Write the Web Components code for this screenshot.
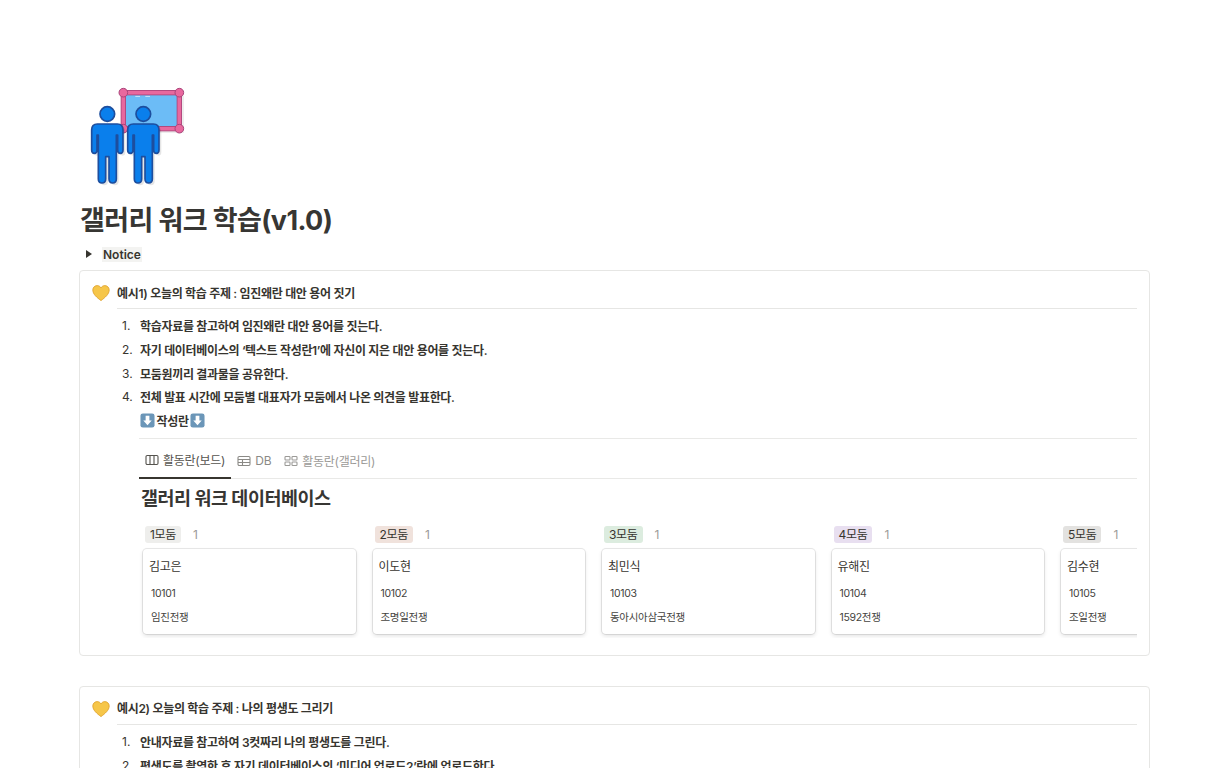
<!DOCTYPE html>
<html lang="ko">
<head>
<meta charset="utf-8">
<title>갤러리 워크 학습</title>
<style>
  html, body { margin: 0; height: 768px; overflow: hidden; background: #fff; }
  body {
    font-family: Inter, "Noto Sans CJK KR", sans-serif;
    color: #37352f;
  }
</style>
</head>
<body>
<notion-page>
  <page-icon slot="pageicon"></page-icon>
  <h1 slot="title">갤러리 워크 학습(v1.0)</h1>
  <notion-toggle slot="toggle">Notice</notion-toggle>

  <notion-callout heading="예시1) 오늘의 학습 주제 : 임진왜란 대안 용어 짓기">
    <num-item n="1">학습자료를 참고하여 임진왜란 대안 용어를 짓는다.</num-item>
    <num-item n="2">자기 데이터베이스의 ‘텍스트 작성란1’에 자신이 지은 대안 용어를 짓는다.</num-item>
    <num-item n="3">모둠원끼리 결과물을 공유한다.</num-item>
    <num-item n="4">전체 발표 시간에 모둠별 대표자가 모둠에서 나온 의견을 발표한다.</num-item>
    <write-label>작성란</write-label>
    <board-view title="갤러리 워크 데이터베이스">
      <board-column tag="1모둠" tone="#eeeeec" name="김고은" code="10101" topic="임진전쟁"></board-column>
      <board-column tag="2모둠" tone="#f0e2dc" name="이도현" code="10102" topic="조명일전쟁"></board-column>
      <board-column tag="3모둠" tone="#dcecdf" name="최민식" code="10103" topic="동아시아삼국전쟁"></board-column>
      <board-column tag="4모둠" tone="#e8dff0" name="유해진" code="10104" topic="1592전쟁"></board-column>
      <board-column tag="5모둠" tone="#e3e2e0" name="김수현" code="10105" topic="조일전쟁"></board-column>
    </board-view>
  </notion-callout>

  <notion-callout heading="예시2) 오늘의 학습 주제 : 나의 평생도 그리기">
    <num-item n="1">안내자료를 참고하여 3컷짜리 나의 평생도를 그린다.</num-item>
    <num-item n="2">평생도를 촬영한 후 자기 데이터베이스의 ‘미디어 업로드2’란에 업로드한다.</num-item>
  </notion-callout>
</notion-page>

<script>
function shadow(el, html) {
  el.attachShadow({ mode: 'open' }).innerHTML = html;
}

class NotionPage extends HTMLElement {
  connectedCallback() {
    shadow(this, `
      <style>
        :host { display: block; padding: 75px 79px 0; }
        ::slotted(h1) {
          margin: 8px 0 0 1px;
          font-size: 27px;
          letter-spacing: -.6px;
          line-height: 36px;
          font-weight: 700;
          color: #373633;
        }
        .body { display: flex; flex-direction: column; gap: 30px; }
      </style>
      <slot name="pageicon"></slot>
      <slot name="title"></slot>
      <slot name="toggle"></slot>
      <div class="body"><slot></slot></div>
    `);
  }
}

class PageIcon extends HTMLElement {
  connectedCallback() {
    const person = `M-30 147H30Q47 147 47 165V225Q47 235 39 235Q31 235 31 225V180H27V312Q27 324 16 324Q5 324 5 312V245H-5V312Q-5 324-16 324Q-27 324-27 312V180H-31V225Q-31 235-39 235Q-47 235-47 225V165Q-47 147-30 147Z`;
    const man = x => `
      <g transform="translate(${x} 0)">
        <path d="${person}" transform="translate(7 7)" fill="#000" opacity=".1"/>
        <path d="${person}" fill="#0a7fec" stroke="#1d4e9e" stroke-width="5" stroke-linejoin="round"/>
        <circle cy="117" r="22" fill="#0a7fec" stroke="#1d4e9e" stroke-width="5"/>
      </g>`;
    shadow(this, `
      <style>
        :host { display: block; width: 130px; height: 120px; margin-left: -9px; }
        svg { display: block; filter: blur(.4px); }
      </style>
      <svg width="130" height="120" viewBox="0 0 390 360">
        <rect x="166" y="62" width="176" height="112" fill="#000" opacity=".07"/>
        <rect x="160" y="53" width="168" height="108" fill="#6cbcf6"/>
        <path d="M196 64h14M226 64h14" stroke="#cfe9fb" stroke-width="3"/>
        <rect x="160" y="53" width="168" height="108" fill="none" stroke="#a8447a" stroke-width="16"/>
        <rect x="160" y="53" width="168" height="108" fill="none" stroke="#e8689e" stroke-width="11"/>
        <g fill="#e8689e" stroke="#a8447a" stroke-width="3">
          <circle cx="160" cy="53" r="13"/><circle cx="328" cy="53" r="13"/>
          <circle cx="160" cy="161" r="13"/><circle cx="328" cy="161" r="13"/>
        </g>
        ${man(112)}${man(220)}
      </svg>
    `);
  }
}

class NotionToggle extends HTMLElement {
  connectedCallback() {
    shadow(this, `
      <style>
        :host {
          display: flex; align-items: center;
          height: 24px; margin: 3px 0 4px 7px;
          font-size: 12px; font-weight: 600; color: #37352f;
        }
        .arrow {
          width: 0; height: 0; margin-right: 10px;
          border-left: 6px solid #37352f;
          border-top: 4px solid transparent;
          border-bottom: 4px solid transparent;
        }
        .label { background: #f3f3f1; padding: 0 1px; line-height: 15px; }
      </style>
      <span class="arrow"></span><span class="label"><slot></slot></span>
    `);
  }
}

class NotionCallout extends HTMLElement {
  connectedCallback() {
    shadow(this, `
      <style>
        :host {
          display: block; box-sizing: border-box;
          border: 1px solid #e6e6e4; border-radius: 4px;
          padding: 7px 12px 17px 12px;
        }
        .top { display: flex; align-items: center; height: 28px; }
        svg { width: 18px; height: 18px; margin: 0 7px 0 0; flex: none; position: relative; top: 1px; }
        h3 { margin: 0; font-size: 12px; letter-spacing: -.32px; font-weight: 600; color: #37352f; }
        hr { border: 0; height: 1px; background: #e6e6e4; margin: 2px 0 5px 25px; }
        .list { margin-left: 25px; }
      </style>
      <div class="top">
        <svg viewBox="0 0 18 18">
          <path d="M9 16.600C5 13.600.8 10.200.8 6 .8 3.400 2.900 1.600 5.200 1.600 6.900 1.600 8.200 2.500 9 3.900 9.800 2.500 11.100 1.600 12.800 1.600 15.100 1.600 17.200 3.400 17.200 6 17.200 10.200 13 13.600 9 16.600Z" fill="#f6c649" stroke="#dd9d26" stroke-width=".8"/>
        </svg>
        <h3>${this.getAttribute('heading')}</h3>
      </div>
      <hr>
      <div class="list"><slot></slot></div>
    `);
  }
}

class NumItem extends HTMLElement {
  connectedCallback() {
    shadow(this, `
      <style>
        :host {
          display: flex; height: 23.7px; align-items: center;
          font-size: 12px; letter-spacing: -.32px; font-weight: 600; color: #37352f;
        }
        .n { width: 23px; padding-left: 5px; box-sizing: border-box; font-weight: 400; flex: none; letter-spacing: 0; }
      </style>
      <span class="n">${this.getAttribute('n')}.</span><span><slot></slot></span>
    `);
  }
}

class WriteLabel extends HTMLElement {
  connectedCallback() {
    const arrow = `<svg viewBox="0 0 16 16"><rect x=".5" y=".5" width="15" height="15" rx="2.5" fill="#6b96b8"/><path d="M6 3h4v5h2.500L8 13 3.500 8H6z" fill="#fff"/></svg>`;
    shadow(this, `
      <style>
        :host {
          display: flex; align-items: center; gap: 1.5px;
          height: 24px; margin-left: 23px;
          font-size: 12px; letter-spacing: -.32px; font-weight: 600; color: #37352f;
        }
        svg { width: 15px; height: 15px; }
      </style>
      ${arrow}<span><slot></slot></span>${arrow}
    `);
  }
}

class BoardView extends HTMLElement {
  connectedCallback() {
    const board = `<svg viewBox="0 0 14 14" fill="none" stroke="currentColor" stroke-width="1.1"><rect x="1" y="2.500" width="12" height="9" rx="1.200"/><path d="M5 2.500v9M9 2.500v9"/></svg>`;
    const table = `<svg viewBox="0 0 14 14" fill="none" stroke="currentColor" stroke-width="1.1"><rect x="1" y="2.500" width="12" height="9" rx="1.200"/><path d="M1 5.500h12M1 8.500h12M5.500 5.500v6"/></svg>`;
    const gallery = `<svg viewBox="0 0 14 14" fill="none" stroke="currentColor" stroke-width="1.1"><rect x="1" y="2.500" width="5" height="3.500" rx=".8"/><rect x="8" y="2.500" width="5" height="3.500" rx=".8"/><rect x="1" y="8" width="5" height="3.500" rx=".8"/><rect x="8" y="8" width="5" height="3.500" rx=".8"/></svg>`;
    shadow(this, `
      <style>
        :host { display: block; margin: 5px 0 0 22px; }
        .tabs {
          display: flex; height: 39px; align-items: stretch;
          border-top: 1px solid #e9e9e7; border-bottom: 1px solid #e9e9e7;
          font-size: 12px; letter-spacing: -.25px; color: #9b9a97;
        }
        .tab { display: flex; align-items: center; gap: 4px; padding: 3px 6px 0; position: relative; top: 1px; box-sizing: border-box; }
        .tab svg { width: 14px; height: 14px; }
        .tab.on { color: #55534e; border-bottom: 2px solid #37352f; }
        .tab.db { color: #8b8a86; }
        .tab.gal { margin-left: 1px; }
        h2 { margin: 4px 0 0 2px; font-size: 18.5px; letter-spacing: -.5px; line-height: 30px; font-weight: 700; color: #373633; }
        .cols {
          display: flex; gap: 17px; margin-top: 10px; padding: 0 0 4px 4px;
          overflow: hidden;
        }
      </style>
      <div class="tabs">
        <div class="tab on">${board}활동란(보드)</div>
        <div class="tab db">${table}DB</div>
        <div class="tab gal">${gallery}활동란(갤러리)</div>
      </div>
      <h2>${this.getAttribute('title')}</h2>
      <div class="cols"><slot></slot></div>
    `);
  }
}

class BoardColumn extends HTMLElement {
  connectedCallback() {
    const a = n => this.getAttribute(n);
    shadow(this, `
      <style>
        :host { display: block; flex: none; width: 212.5px; }
        .hd { display: flex; align-items: center; height: 24px; padding-left: 2px; font-size: 12px; letter-spacing: -.3px; }
        .tag { background: ${a('tone')}; border-radius: 3px; padding: 0 5px; line-height: 17px; color: #37352f; }
        .count { margin-left: 12px; color: #9b9a97; font-size: 12px; }
        .card {
          box-sizing: border-box; height: 85px; margin-top: 2px;
          border-radius: 4px; background: #fff; padding: 9px 6px;
          box-shadow: 0 0 0 1px rgba(15,15,15,.09), 0 2px 4px rgba(15,15,15,.12);
        }
        .name { font-size: 12px; letter-spacing: -.3px; line-height: 18px; color: #37352f; }
        .row { font-size: 10.5px; letter-spacing: -.3px; line-height: 16px; margin: 0 0 0 2px; color: #444340; }
        .name + .row { margin-top: 10px; }
        .row + .row { margin-top: 8px; }
      </style>
      <div class="hd"><span class="tag">${a('tag')}</span><span class="count">1</span></div>
      <div class="card">
        <div class="name">${a('name')}</div>
        <div class="row">${a('code')}</div>
        <div class="row">${a('topic')}</div>
      </div>
    `);
  }
}

customElements.define('notion-page', NotionPage);
customElements.define('page-icon', PageIcon);
customElements.define('notion-toggle', NotionToggle);
customElements.define('notion-callout', NotionCallout);
customElements.define('num-item', NumItem);
customElements.define('write-label', WriteLabel);
customElements.define('board-view', BoardView);
customElements.define('board-column', BoardColumn);
</script>
</body>
</html>
